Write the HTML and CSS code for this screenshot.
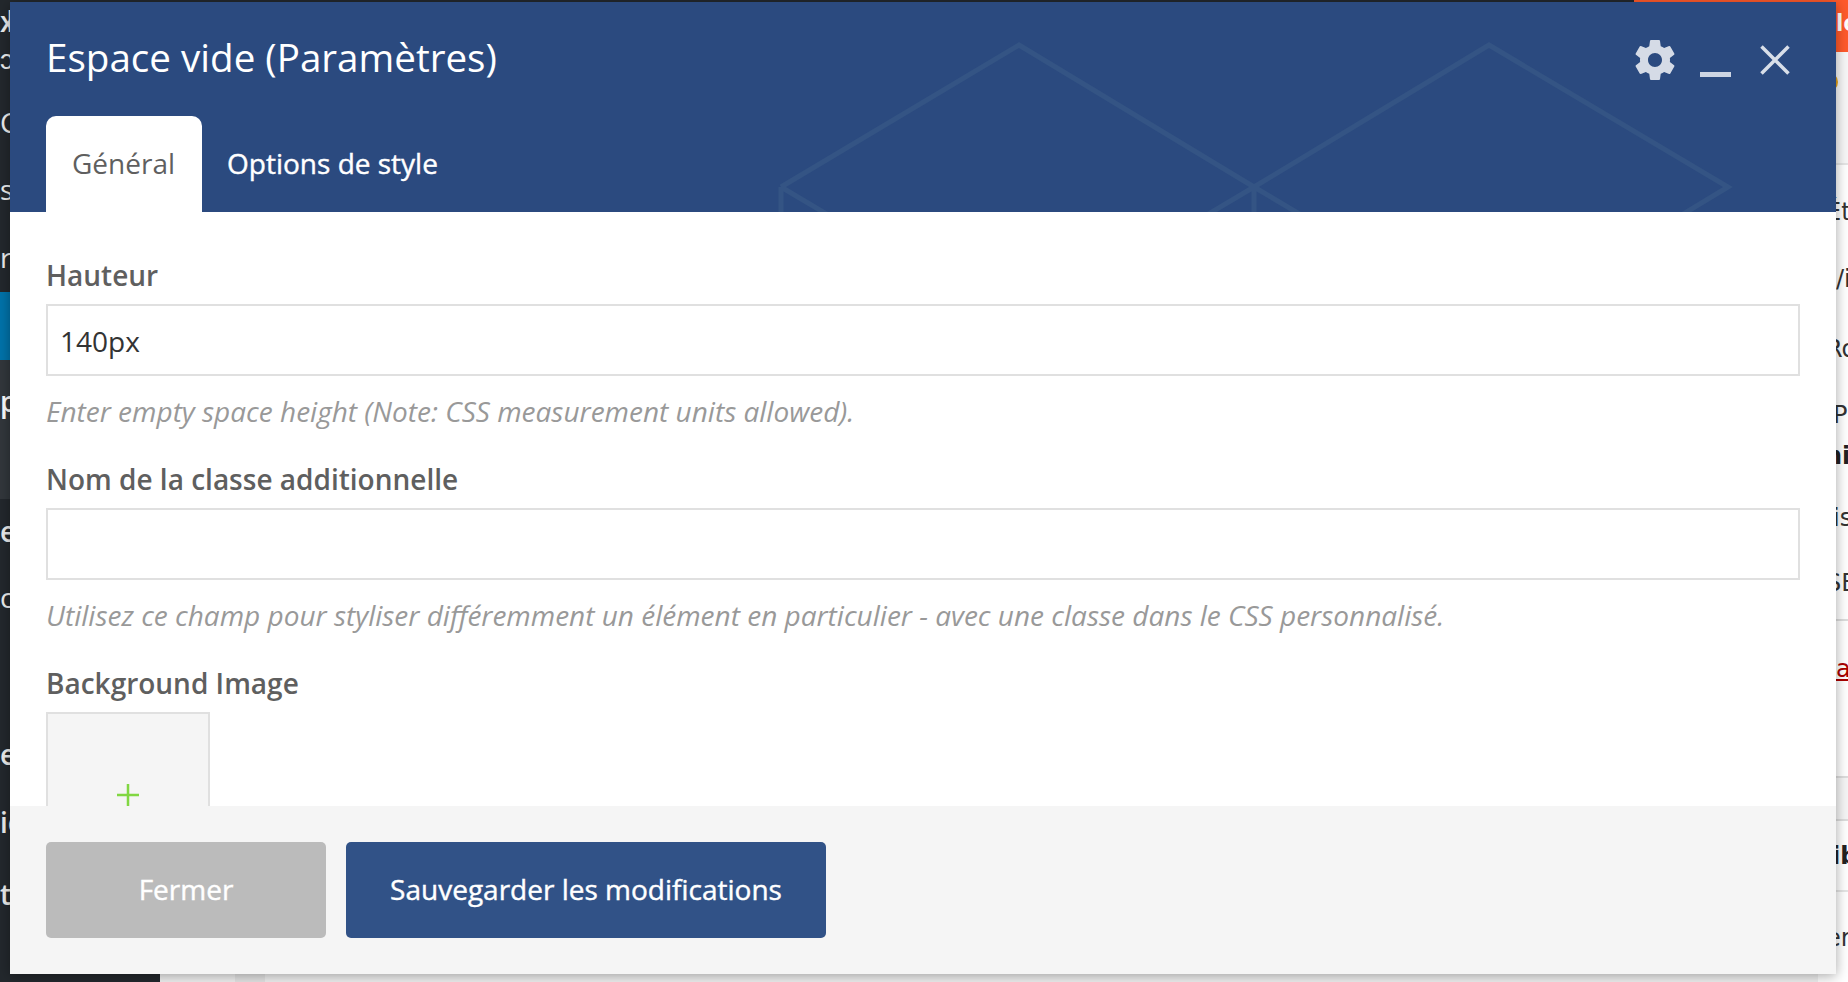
FILE: index.html
```html
<!DOCTYPE html>
<html lang="fr">
<head>
  <meta charset="UTF-8">
  <title>Espace vide (Paramètres)</title>
  <link rel="stylesheet" href="styles.css">
</head>
<body>

<div class="page">
  <div class="adminbar">
    <span class="adminbar-fill"></span>
    <span class="adminbar-alert"></span>
  </div>
  <div class="page-body">
    <nav class="sidebar">
      <div class="menu-top">
        <span class="frag f1">xl</span>
        <span class="frag f2">ɔ</span>
        <span class="frag f3">C</span>
        <span class="frag f4">s</span>
        <span class="frag f5">r</span>
      </div>
      <div class="menu-current"></div>
      <div class="menu-sub">
        <span class="frag f6">p</span>
      </div>
      <div class="menu-bottom">
        <span class="frag f7">e</span>
        <span class="frag f8">ct</span>
        <span class="frag f9">er</span>
        <span class="frag f10">ic</span>
        <span class="frag f11">te</span>
      </div>
    </nav>
    <main class="content">
      <div class="content-tabs">
        <span class="content-tab"></span>
        <span class="content-tab alt"></span>
      </div>
      <div class="aside">
        <div class="aside-alert">lo</div>
        <div class="aside-notice"><span class="notice-dot"></span></div>
        <span class="side-text s1">Ét</span>
        <span class="side-text s2">/i</span>
        <span class="side-text s3">Ro</span>
        <span class="side-text s4">Pu</span>
        <span class="side-text s5 strong">ni</span>
        <span class="side-text s6">is</span>
        <span class="side-text s7">SE</span>
        <div class="aside-box">
          <a class="side-link">a</a>
        </div>
        <div class="aside-head"></div>
        <span class="side-text s8 strong">ib</span>
        <div class="aside-last"><span class="side-text s9">er</span></div>
      </div>
    </main>
  </div>
</div>

<div class="modal">
  <header class="modal-head">
    <svg class="cubes" viewBox="0 0 1826 210" aria-hidden="true">
      <path d="M771 185 1009 43 1244 185 1479 43 1718 185 1660 220M771 185V220M771 185 830 220M1244 185V220M1244 185 1185 220M1244 185 1303 220"/>
    </svg>
    <div class="head-top">
      <h2 class="modal-title">Espace vide (Paramètres)</h2>
      <div class="head-icons">
        <svg class="icon-gear" viewBox="2 2 20 20"><path d="M19.43 12.98c.04-.32.07-.64.07-.98s-.03-.66-.07-.98l2.11-1.65c.19-.15.24-.42.12-.64l-2-3.46c-.12-.22-.39-.3-.61-.22l-2.49 1c-.52-.4-1.08-.73-1.69-.98l-.38-2.65C14.46 2.18 14.25 2 14 2h-4c-.25 0-.46.18-.49.42l-.38 2.65c-.61.25-1.17.59-1.69.98l-2.49-1c-.23-.09-.49 0-.61.22l-2 3.46c-.13.22-.07.49.12.64l2.11 1.65c-.04.32-.07.65-.07.98s.03.66.07.98l-2.11 1.65c-.19.15-.24.42-.12.64l2 3.46c.12.22.39.3.61.22l2.49-1c.52.4 1.08.73 1.69.98l.38 2.65c.03.24.24.42.49.42h4c.25 0 .46-.18.49-.42l.38-2.65c.61-.25 1.17-.59 1.69-.98l2.49 1c.23.09.49 0 .61-.22l2-3.46c.12-.22.07-.49-.12-.64l-2.11-1.65zM12 15.5c-1.93 0-3.5-1.57-3.5-3.5s1.57-3.5 3.5-3.5 3.5 1.57 3.5 3.5-1.57 3.5-3.5 3.5z"/></svg>
        <span class="icon-min"></span>
        <svg class="icon-close" viewBox="0 0 30 30"><path d="M1.5 1.5 28.5 28.5M28.5 1.5 1.5 28.5"/></svg>
      </div>
    </div>
    <div class="tabs">
      <a class="tab active">Général</a>
      <a class="tab">Options de style</a>
    </div>
  </header>

  <div class="modal-body">
    <div class="field">
      <label class="field-label">Hauteur</label>
      <input class="field-input" type="text" value="140px">
      <p class="field-hint">Enter empty space height (Note: CSS measurement units allowed).</p>
    </div>
    <div class="field">
      <label class="field-label">Nom de la classe additionnelle</label>
      <input class="field-input" type="text">
      <p class="field-hint">Utilisez ce champ pour styliser différemment un élément en particulier - avec une classe dans le CSS personnalisé.</p>
    </div>
    <div class="field">
      <label class="field-label">Background Image</label>
      <div class="upload">
        <svg class="upload-plus" viewBox="0 0 22 22"><path d="M11 0V22M0 11H22"/></svg>
      </div>
    </div>
  </div>

  <footer class="modal-foot">
    <button class="btn btn-close">Fermer</button>
    <button class="btn btn-save">Sauvegarder les modifications</button>
  </footer>
</div>

</body>
</html>
```

FILE: styles.css
```css
html, body {
  margin: 0;
  padding: 0;
  height: 982px;
  overflow: hidden;
}
body {
  font-family: "Open Sans", sans-serif;
  background: #f1f1f1;
  color: #333;
}

/* page behind the modal */
.page {
  height: 982px;
  display: flex;
  flex-direction: column;
}
.adminbar {
  display: flex;
  flex: none;
  height: 2px;
  background: #23282d;
}
.adminbar-fill { flex: 1; }
.adminbar-alert { width: 214px; background: #ff5a2b; }
.page-body {
  flex: 1;
  display: flex;
  min-height: 0;
}
.sidebar {
  width: 160px;
  flex: none;
  display: flex;
  flex-direction: column;
  background: #23282d;
  color: #eee;
}
.menu-top { height: 290px; display: flex; flex-direction: column; }
.menu-current { height: 68px; background: #0073aa; }
.menu-sub { height: 139px; background: #32373c; display: flex; flex-direction: column; }
.menu-bottom { flex: 1; display: flex; flex-direction: column; }
.frag {
  display: block;
  font-size: 28px;
  line-height: 30px;
  white-space: nowrap;
}
.f1 { margin-top: 4px; font-weight: 600; letter-spacing: -9px; }
.f2 { margin-top: 7px; }
.f3 { margin-top: 34px; }
.f4 { margin-top: 37px; }
.f5 { margin-top: 38px; }
.f6 { margin-top: 26px; font-weight: 600; color: #fff; }
.f7 { margin-top: 17px; font-weight: 600; }
.f8 { margin-top: 36px; }
.f9 { margin-top: 127px; font-weight: 600; }
.f10 { margin-top: 38px; font-weight: 600; }
.f11 { margin-top: 42px; font-weight: 600; }

.content {
  flex: 1;
  display: flex;
  justify-content: space-between;
  background: #f1f1f1;
}
.content-tabs {
  margin-top: auto;
  display: flex;
  height: 8px;
}
.content-tab { width: 45px; background: #f1f1f1; }
.content-tab.alt { width: 30px; margin-left: 30px; background: #e5e5e5; }
.aside {
  width: 30px;
  padding-left: 18px;
  box-sizing: border-box;
  display: flex;
  flex-direction: column;
  background: #fff;
}
.aside-alert {
  flex: none;
  height: 50px;
  margin-left: -18px;
  padding-left: 18px;
  font-size: 24px;
  font-weight: 700;
  line-height: 40px;
  color: #fff;
  background: #ff5a2b;
}
.aside-notice {
  flex: none;
  height: 113px;
  margin-left: -18px;
  padding-top: 20px;
  box-sizing: border-box;
  background: #f7f7f7;
  border-bottom: 2px solid #e5e5e5;
}
.notice-dot {
  display: block;
  width: 20px;
  height: 20px;
  border-radius: 50%;
  background: #e8a317;
}
.side-text {
  display: block;
  font-family: "DejaVu Sans", sans-serif;
  font-size: 24px;
  line-height: 30px;
  white-space: nowrap;
  color: #333;
}
.strong { font-weight: 700; color: #222; }
.s1 { margin-top: 32px; margin-left: -10px; }
.s2 { margin-top: 37px; }
.s3 { margin-top: 40px; margin-left: -10px; }
.s4 { margin-top: 36px; margin-left: -3px; }
.s5 { margin-top: 11px; margin-left: -11px; }
.s6 { margin-top: 32px; margin-left: -3px; }
.s7 { margin-top: 35px; margin-left: -10px; }
.aside-box {
  flex: none;
  margin-left: -18px;
  margin-top: 21px;
  padding-left: 18px;
  height: 159px;
  border-top: 2px solid #ddd;
  border-bottom: 2px solid #ddd;
  box-sizing: border-box;
}
.side-link {
  display: block;
  margin-top: 34px;
  font-family: "DejaVu Sans", sans-serif;
  font-size: 24px;
  line-height: 28px;
  color: #a00;
  text-decoration: underline;
}
.aside-head {
  flex: none;
  margin-left: -18px;
  height: 43px;
  background: #f5f5f5;
  border-bottom: 2px solid #ddd;
  box-sizing: border-box;
}
.s8 { margin-top: 20px; margin-left: -4px; }
.aside-last {
  margin-left: -18px;
  padding-left: 18px;
  margin-top: 19px;
  flex: 1;
  border-top: 2px solid #e5e5e5;
}
.s9 { margin-top: 31px; margin-left: -10px; }

/* modal */
.modal {
  position: absolute;
  left: 10px;
  top: 2px;
  width: 1826px;
  height: 972px;
  display: flex;
  flex-direction: column;
  background: #fff;
  box-shadow: 0 2px 12px rgba(0, 0, 0, 0.35);
}
.modal-head {
  position: relative;
  flex: none;
  height: 210px;
  padding: 0 36px;
  box-sizing: border-box;
  display: flex;
  flex-direction: column;
  background: #2b4a7f;
  overflow: hidden;
}
.cubes {
  position: absolute;
  left: 0;
  top: 0;
  width: 1826px;
  height: 210px;
}
.cubes path {
  fill: none;
  stroke: #345484;
  stroke-width: 5;
}
.head-top {
  position: relative;
  height: 114px;
  display: flex;
  justify-content: space-between;
}
.modal-title {
  margin: 31px 0 0;
  font-size: 38.6px;
  line-height: 48px;
  font-weight: 400;
  color: #fff;
}
.head-icons {
  display: flex;
  align-items: flex-start;
  padding-top: 38px;
  padding-right: 10px;
}
.icon-gear { width: 40px; height: 40px; fill: #d5dbe6; }
.icon-min {
  width: 31px;
  height: 5px;
  margin-left: 25px;
  margin-top: 32px;
  background: #cdd5e3;
}
.icon-close {
  width: 30px;
  height: 30px;
  margin-left: 29px;
  margin-top: 5px;
  fill: none;
  stroke: #d9dfe9;
  stroke-width: 3.5;
}
.tabs {
  position: relative;
  flex: 1;
  display: flex;
}
.tab {
  padding: 0 25px;
  font-size: 28px;
  font-weight: 400;
  line-height: 94px;
  height: 96px;
  color: #fff;
  -webkit-text-stroke: 0.4px #fff;
}
.tab.active {
  padding: 0 27px 0 26px;
  background: #fff;
  color: #5f5f5f;
  border-radius: 10px 10px 0 0;
  -webkit-text-stroke: 0;
}
.modal-body {
  flex: 1;
  min-height: 0;
  overflow: hidden;
  padding: 45px 36px 0;
}
.field { margin-bottom: 32px; }
.field-label {
  display: block;
  margin-bottom: 11px;
  font-size: 28px;
  line-height: 36px;
  font-weight: 600;
  color: #5f5f5f;
}
.field-input {
  display: block;
  width: 100%;
  height: 72px;
  padding: 2px 12px 0;
  box-sizing: border-box;
  border: 2px solid #e0e0e0;
  background: #fff;
  font-family: inherit;
  font-size: 28px;
  color: #333;
  outline: none;
}
.field-hint {
  margin: 17px 0 0;
  font-size: 28px;
  line-height: 36px;
  font-style: italic;
  color: #999;
}
.upload {
  width: 164px;
  height: 164px;
  margin-top: 1px;
  box-sizing: border-box;
  border: 2px solid #e0e0e0;
  background: #f5f5f5;
  display: flex;
  align-items: center;
  justify-content: center;
}
.upload-plus {
  width: 22px;
  height: 22px;
  margin-top: 2px;
  fill: none;
  stroke: #81d742;
  stroke-width: 2.5;
}
.modal-foot {
  flex: none;
  height: 168px;
  padding: 36px 36px 0;
  box-sizing: border-box;
  display: flex;
  align-items: flex-start;
  gap: 20px;
  background: #f5f5f5;
}
.btn {
  height: 96px;
  padding: 0 0 2px;
  border: none;
  border-radius: 5px;
  font-family: inherit;
  font-size: 28px;
  font-weight: 400;
  color: #fff;
  -webkit-text-stroke: 0.4px #fff;
}
.btn-close { width: 280px; background: #bbb; }
.btn-save { width: 480px; background: #315287; }
```
